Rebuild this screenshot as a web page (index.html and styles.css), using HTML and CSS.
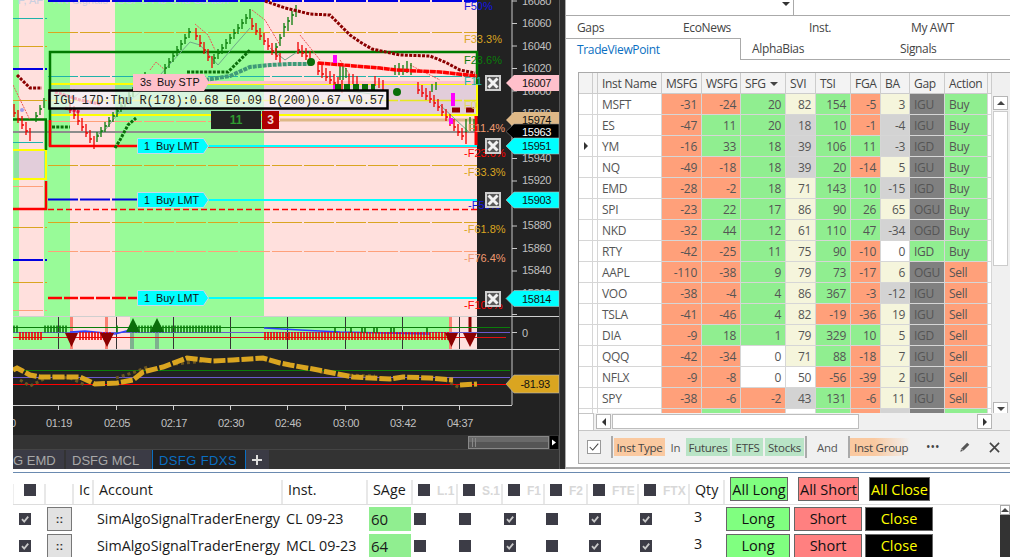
FILE: index.html
```html
<!DOCTYPE html>
<html lang="en">
<head>
<meta charset="utf-8">
<title>Trading workspace</title>
<link rel="stylesheet" href="styles.css">
</head>
<body>
<svg class="defs" width="0" height="0" aria-hidden="true">
  <symbol id="tick" viewBox="0 0 12 12"><path d="M3 6.2l2.2 2.4 4-5" fill="none" stroke="#c9c9c9" stroke-width="1.8"/></symbol>
  <symbol id="xbtn" viewBox="0 0 16 16"><rect x="1" y="1" width="14" height="14" fill="#5a5a5a" stroke="#cfcfcf" stroke-width="2"/><path d="M3.5 3.5l9 9m0-9l-9 9" stroke="#f2f2f2" stroke-width="3"/></symbol>
</svg>
<main class="top">
  <section class="chart">
    <svg class="chart-svg" viewBox="13 0 552 469" width="552" height="469">
      <rect x="13" y="0" width="552" height="469" fill="#222"/>
      <!-- main price plot bands -->
      <rect x="13" y="0" width="464" height="316" fill="#ffe0dd"/>
      <path d="M13 0h6v316h-6zM44 0h26v316h-26zM115 0h149v316h-149z" fill="#98fb98"/>
      <text class="title" x="18" y="4">F, AF</text>
      <text class="title" x="53" y="4">NN Signals - DSFG Fib Grid Canton</text>

      <!-- fib and level lines -->
      <g fill="none" stroke-dasharray="30 2">
        <path d="M48 1H477" stroke="#0000e0" stroke-width="2"/>
        <path d="M13 18.500H47M13 142.500H47M48 76.500H477" stroke="#20b2aa"/>
        <path d="M48 32.500H477M13 46.500H47M13 100.500H47M48 165.500H477M48 222.500H477M13 227.500H47M13 282.500H47" stroke="#daa520" stroke-width="1.200"/>
        <path d="M13 186.500H47M13 310.500H47M48 251.500H477M48 121.500H280" stroke="#ffa07a" stroke-width="1.200"/>
        <path d="M13 69H47M48 199.500H137M13 260H47" stroke="#0000e0" stroke-width="2"/>
      </g>
      <path d="M48 298H137" stroke="#f00" stroke-width="2.500" stroke-dasharray="14 2" fill="none"/>
      <path d="M48 209.500H477" stroke="#f00" stroke-width="1.600" stroke-dasharray="6 3" fill="none"/>

      <!-- yellow range boxes -->
      <rect x="49" y="84" width="428" height="31" fill="#6e82d2" fill-opacity=".2"/>
      <rect x="14" y="150" width="32" height="29" fill="#6e82d2" fill-opacity=".2"/>
      <path d="M49 84H477V115H49M13 150H46V179H13" fill="none" stroke="#ff0" stroke-width="2"/>
      <path d="M48 100.500H477" stroke="#e8e820" stroke-width="1.500" stroke-dasharray="30 2"/>
      <path d="M208 82.500H477" stroke="#ffc0cb" stroke-width="3"/>
      <path d="M280 120H477" stroke="#deb887" stroke-width="3"/>
      <path d="M13 132H477" stroke="#8c8c8c" stroke-width="2"/>

      <!-- green / red structure lines -->
      <path d="M477 84V52H50V146M13 119.500H47M46 120V150" fill="none" stroke="#007a00" stroke-width="2.500"/>
      <path d="M50 120V146H137M46 181V209H13" fill="none" stroke="#f00" stroke-width="2.500"/>
      <path d="M476 116V146" stroke="#f00" stroke-width="3"/>
      <path d="M208 146.800H477" stroke="#f00" stroke-width="1.500"/>
      <path d="M208 146H477M208 200H477M208 298H477" stroke="#0ff" stroke-width="2"/>

      <!-- thin average curves -->
      <path d="M97 135L105 130 125 105 160 75 190 42 200 45 218 65 235 45 250 28M270 48L285 60 300 50M340 90L380 95M440 105L470 133" fill="none" stroke="#6fa88a"/>
      <path d="M13 85L30 120M55 90L75 90M150 70L156 62 165 70M195 24L208 35 215 50M252 10L265 20 280 45M300 35L320 60M340 60L350 75M410 65L440 80" fill="none" stroke="#ee5555" stroke-dasharray="2 1"/>

      <!-- price bars -->
      <path class="bars-g" d="M97 142v-10m0 4h2m2 1v-10m0 4h2m2 1v-10m0 4h2m2 1v-10m0 4h2m2 1v-10m0 4h2m2 1v-10m0 4h2m2 1v-10m0 4h2m2 1v-10m0 4h2m2 1v-10m0 4h2m2 1v-10m0 4h2m2 1v-10m0 4h2m2 1v-10m0 4h2m2 1v-10m0 4h2M165 74v-10m0 4h2m2 0v-10m0 4h2m2 0v-10m0 4h2m2 0v-10m0 4h2m2 0v-10m0 4h2m2 0v-10m0 4h2m2 0v-10m0 4h2M214 64v-10m0 4h2m2 1v-10m0 4h2m2 1v-10m0 4h2m2 1v-10m0 4h2m2 1v-10m0 4h2m2 1v-10m0 4h2m2 1v-10m0 4h2m2 1v-10m0 4h2m2 1v-10m0 4h2m2 1v-10M36 122v-10m0 4h2m2 -1v-10m0 4h2m2 -1v-10M276 55v-12m0 4h2m2 -1v-12m0 4h2m2 -1v-14m0 4h2m2 4v-14m0 4h2m2 4v-14m0 4h2m2 2v-12M340 80v-14m3 14v-14m3 12v-10M395 75v-10m4 10v-12m4 12v-10m4 8v-12m4 14v-12M432 92v-8m4 6v-8M466 133v-14m4 12v-14m4 14v-12"/>
      <path class="bars-r" d="M14 104v13m0-4h2m2-3v13m0-4h2m2-3v13m0-4h2m2-3v13m0-4h2m2-3v13M70 100v13m0-4h2m2-3v13m0-4h2m2-3v13m0-4h2m2-3v13m0-4h2m2-3v13m0-4h2m2-3v13m0-4h2m2-3v13M196 28v12m0-4h2m2-1v12m0-4h2m2-1v12m0-4h2m2-1v12m0-4h2m2-1v12M252 18v12m0-4h2m2-3v12m0-4h2m2-3v12m0-4h2m2-3v12m0-4h2m2-3v12m0-4h2m2-3v12m0-4h2m2-3v12m0-4h2m2-3v12M298 42v12m0-4h2m2-5v12m0-4h2m2-5v12m0-4h2m2-5v12M318 62v13m0-4h2m2-6v13m0-4h2m2-6v13m0-4h2m2-6v13m0-4h2m2-6v13m0-4h2m2-6v13m0-4h2m2-6v13M349 74v12m4-12v10m4-8v12M375 76v10m4-8v10m4-8v10M418 82v12m0-4h2m2-5v12m0-4h2m2-5v12m0-4h2m2-5v12m0-4h2m2-4v12m0-4h2m2-4v12m0-4h2m2-3v12m0-4h2m2-3v12m0-4h2m2-3v12m0-4h2m2-3v12m0-4h2m2-3v12m0-4h2m2-4v12m0-4h2m2-4v12"/>

      <!-- markers and thick averages -->
      <path d="M265 1L285 8 310 14 330 15 350 35 360 42 372 49 400 55 430 56 445 62 460 70 475 73M17 75L22 80 27 85 30 88 42 88" fill="none" stroke="#8b0000" stroke-width="3" stroke-dasharray="3 1.300"/>
      <path d="M52 127H70M115 148L120 140 128 125 136 118M187 72H228L240 60 250 50" fill="none" stroke="#0a6e0a" stroke-width="3" stroke-dasharray="3 1.300"/>
      <path d="M205 80L230 76 250 67 270 65 290 64 312 64" fill="none" stroke="#3f9a78" stroke-width="4" stroke-dasharray="4 1"/>
      <path d="M318 63L380 68 396 70 440 72 477 76" fill="none" stroke="#f00" stroke-width="3.500" stroke-dasharray="6 .6"/>
      <path d="M335 55V63M453 93V106M335 85V90M451 118V124" stroke="#f0f" stroke-width="4"/>
      <path d="M452 110h8M466 110h8" stroke="#8b0000" stroke-width="5"/>
      <path d="M335 87h40" stroke="#0a6e0a" stroke-width="6" stroke-dasharray="6 3"/>
      <circle cx="311" cy="62" r="4" fill="#0a6e0a"/>
      <circle cx="397" cy="92" r="4" fill="#0a6e0a"/>
      <circle cx="22" cy="110" r="2" fill="#9c9cf0"/>
      <path d="M55 92L80 100 100 104M65 108L80 112" fill="none" stroke="#e0103c" stroke-width="3" stroke-dasharray="3 1"/>

      <!-- fib labels -->
      <text class="fib c-blue" x="464" y="10">F50%</text>
      <text class="fib c-gold" x="464" y="43">F33.3%</text>
      <text class="fib c-green" x="464" y="64">F23.6%</text>
      <text class="fib c-teal" x="464" y="85">F11</text>
      <text class="fib c-pale" x="464" y="109">F0</text>
      <text class="fib c-salmon" x="468" y="132">F11.4%</text>
      <text class="fib c-red" x="464" y="157">-F23.6%</text>
      <text class="fib c-gold" x="464" y="176">-F33.3%</text>
      <text class="fib c-blue" x="468" y="209">-F50%</text>
      <text class="fib c-gold" x="464" y="233">-F61.8%</text>
      <text class="fib c-salmon" x="464" y="262">-F76.4%</text>
      <text class="fib c-red" x="464" y="309">-F100%</text>

      <!-- right price axis -->
      <path d="M512 0V405" stroke="#c8c8c8"/>
      <path d="M512 1h5M512 23.500h5M512 46h5M512 68.500h5M512 91h5M512 113.500h5M512 136h5M512 158.500h5M512 181h5M512 203.500h5M512 226h5M512 248.500h5M512 271h5M512 293.500h5M512 314.500h5M512 332.500h5" stroke="#c8c8c8"/>
      <g class="axis">
        <text x="522" y="5">16080</text><text x="522" y="27">16060</text><text x="522" y="50">16040</text><text x="522" y="72">16020</text><text x="522" y="95">16000</text><text x="522" y="117">15980</text><text x="522" y="162">15940</text><text x="522" y="184">15920</text><text x="522" y="229">15880</text><text x="522" y="252">15860</text><text x="522" y="274">15840</text><text x="522" y="297">15820</text><text x="522" y="337">0</text>
      </g>

      <!-- box label -->
      <rect x="49.500" y="90.500" width="338" height="18" fill="#fff" fill-opacity=".66" stroke="#000" stroke-width="2.500"/>
      <text class="mono" x="53" y="104">IGU 17D:Thu R(178):0.68 E0.09 B(200)0.67 V0.57</text>
      <rect x="211" y="111" width="50" height="18" fill="#222"/>
      <rect x="262" y="111" width="17" height="18" fill="#b00000"/>
      <text class="mini c-lime" x="236" y="124" text-anchor="middle">11</text>
      <text class="mini c-soft" x="270.500" y="124" text-anchor="middle">3</text>

      <!-- order flags -->
      <path d="M133 74h71l5 8.500-5 8.500h-71z" fill="#ffc0cb"/>
      <text class="tag" x="140" y="86">3s</text><text class="tag" x="157" y="86">Buy STP</text>
      <path d="M137.500 138.500h66l5 7.500-5 7.500h-66z" fill="#0ff" stroke="#c8d8e8"/>
      <path d="M137.500 192.500h66l5 7.500-5 7.500h-66z" fill="#0ff" stroke="#c8d8e8"/>
      <path d="M137.500 290.500h66l5 7.500-5 7.500h-66z" fill="#0ff" stroke="#c8d8e8"/>
      <text class="tag" x="144" y="150">1</text><text class="tag" x="156" y="150">Buy LMT</text>
      <text class="tag" x="144" y="204">1</text><text class="tag" x="156" y="204">Buy LMT</text>
      <text class="tag" x="144" y="302">1</text><text class="tag" x="156" y="302">Buy LMT</text>

      <use href="#xbtn" x="485" y="75" width="16" height="16"/>
      <use href="#xbtn" x="485" y="138" width="16" height="16"/>
      <use href="#xbtn" x="485" y="192" width="16" height="16"/>
      <use href="#xbtn" x="485" y="291" width="16" height="16"/>

      <!-- indicator one -->
      <path d="M13 317h464v32H13z" fill="#98fb98"/>
      <path d="M70 317h60v32H70zM449 317h28v32h-28z" fill="#ffe0dd"/>
      <path d="M70 317h3v32h-3zM105 317h3v32h-3zM449 317h3v32h-3z" fill="#fa8072"/>
      <path d="M130 332h4v17h-4zM155 332h4v17h-4z" fill="#7fb08f"/>
      <path d="M468.500 317h3v16h-3z" fill="#8b0000"/>
      <path d="M58.500 317V349M116.500 317V349M173.500 317V349M230.500 317V349M287.500 317V349M345.500 317V349M402.500 317V349M459.500 317V349" stroke="#333"/>
      <path d="M13 327.500H510" stroke="#0a7d0a"/>
      <path d="M13 332.500H510" stroke="#6a5acd"/>
      <path d="M13 337.500H506" stroke="#e01010"/>
      <path d="M70 332L85 331 115 334 130 330M264 328L300 330 340 332 430 334" fill="none" stroke="#3040ff" stroke-width="1.500"/>
      <path class="osc-g" d="M14 325.500v7m3-7v7M45 325.500v7m3-7v7m3-7v7m3-7v7m3-7v7m3-7v7m3-7v7m3-7v7M117 325.500v7m16-7v7m3-7v7m3-7v7m3-7v7m3-7v7m3-7v7m3-7v7m3-7v7m3-7v7m3-7v7m3-7v7m3-7v7m3-7v7m3-7v7m3-7v7m3-7v7m3-7v7m3-7v7m3-7v7m3-7v7m3-7v7m3-7v7m3-7v7m3-7v7m3-7v7m3-7v7m3-7v7m3-7v7m3-7v7m3-7v7M335 327v6m16-6v6m11-6v6m3-6v6m9-6v6m3-6v6m14-6v6m3-6v6m33-6v6"/>
      <path class="osc-r" d="M20 332v8m3-8v8m3-8v8m3-8v8m3-8v8m3-8v8m3-8v8m3-8v8M80 332v8m3-8v8m3-8v8m3-8v8m3-8v8m3-8v8m3-8v8m3-8v8m3-8v8m3-8v8m3-8v8M265 332v8m3-8v8m3-8v8m3-8v8m3-8v8m3-8v8m3-8v8m3-8v8m3-8v8m3-8v8m3-8v8m3-8v8m3-8v8m3-8v8m3-8v8m3-8v8m3-8v8m3-8v8m3-8v8m3-8v8m3-8v8m3-8v8m3-8v8m3-8v8m3-8v8m3-8v8m3-8v8m3-8v8m3-8v8m3-8v8m3-8v8m3-8v8m3-8v8m3-8v8m3-8v8m3-8v8m3-8v8m3-8v8m3-8v8m3-8v8m3-8v8m3-8v8m3-8v8m3-8v8m3-8v8m3-8v8m3-8v8m3-8v8m3-8v8m3-8v8m3-8v8m3-8v8m3-8v8m3-8v8m3-8v8m3-8v8m3-8v8m3-8v8m3-8v8m3-8v8m3-8v8m3-8v8"/>
      <path d="M65 333h13l-6.500 14zM100 333h14l-7 14zM445 333h13l-6.500 14zM463 333h14l-7 14z" fill="#8b0000"/>
      <path d="M126 332h14l-7-14zM150 332h14l-7-14z" fill="#0a6e0a"/>
      <path d="M13 316.500H560M13 349.500H560" stroke="#cfcfcf"/>

      <!-- indicator two -->
      <path d="M13 370.500H510" stroke="#0a7d0a"/>
      <path d="M13 377.500H510" stroke="#6a5acd"/>
      <path d="M13 384.500H506" stroke="#f00"/>
      <path d="M20 380L30 386 50 376 70 378 85 385M116 378L135 372 150 366M175 364L205 361M320 372L345 375 375 376M445 380L460 388" fill="none" stroke="#6b5520" stroke-width="3" stroke-dasharray="3 3"/>
      <path d="M13 370L17 368 30 375 40 377 63 377 80 377 95 384 117 383 133 380 143 372 163 367 187 358 213 361 233 360 263 358 280 363 290 365 313 369 333 373 353 377 390 379 403 377 430 378 453 380M460 385L477 384" fill="none" stroke="#daa520" stroke-width="5" stroke-dasharray="12 2"/>

      <!-- price tags -->
      <path d="M506 83l8-8h45v16h-45z" fill="#ffc0cb"/>
      <path d="M506 120l8-8h45v16h-45z" fill="#deb887"/>
      <path d="M506 131.500l8-7.500h45v15h-45z" fill="#000" stroke="#888" stroke-width=".6"/>
      <path d="M506 146l8-8h45v16h-45z" fill="#0ff" stroke="#bbb" stroke-width=".6"/>
      <path d="M506 200l8-8h45v16h-45z" fill="#0ff" stroke="#bbb" stroke-width=".6"/>
      <path d="M506 298.500l8-8h45v16h-45z" fill="#0ff" stroke="#bbb" stroke-width=".6"/>
      <path d="M506 384l8-9h45v18h-45z" fill="#daa520" stroke="#bbb" stroke-width=".6"/>
      <g class="ptag">
        <text x="522" y="87">16007</text>
        <text x="522" y="124">15974</text>
        <text x="522" y="136" class="c-white">15963</text>
        <text x="522" y="150">15951</text>
        <text x="522" y="204">15903</text>
        <text x="522" y="303">15814</text>
        <text x="520.500" y="388">-81.93</text>
      </g>

      <!-- time axis -->
      <path d="M13 405.500H512" stroke="#cfcfcf"/>
      <path d="M58.500 405v5M116.500 405v5M173.500 405v5M230.500 405v5M287.500 405v5M345.500 405v5M402.500 405v5M459.500 405v5" stroke="#cfcfcf"/>
      <g class="axis" text-anchor="middle">
        <text x="59" y="427">01:19</text><text x="117" y="427">02:05</text><text x="174" y="427">02:17</text><text x="231" y="427">02:30</text><text x="288" y="427">02:46</text><text x="346" y="427">03:00</text><text x="403" y="427">03:42</text><text x="460" y="427">04:37</text>
      </g>
      <text class="axis" x="10" y="427">0</text>

      <!-- lower scroller -->
      <rect x="13" y="435" width="546" height="34" fill="#333"/>
      <rect x="468.500" y="436.500" width="80" height="12" fill="#555" stroke="#888"/>
      <rect x="469" y="437" width="79" height="5" fill="#6a6a6a"/>
      <path d="M472.500 438v9M475.500 438v9" stroke="#888"/>
      <rect x="550" y="436" width="8" height="13" fill="#000"/>
      <path d="M552 439.500l4 3-4 3z" fill="#fff"/>
      <path d="M13 449.500H559" stroke="#444"/>
      <path d="M559.500 0V469" stroke="#555"/>
      <rect x="560" y="0" width="5" height="469" fill="#2c2c2c"/>

      <!-- tabs -->
      <rect x="13" y="450" width="51" height="19" fill="#3b3b45"/>
      <rect x="66" y="450" width="85" height="19" fill="#3b3b45"/>
      <rect x="152" y="450" width="93" height="19" fill="#1e1e1e"/>
      <path d="M152.500 450v19M245.500 450v19" stroke="#0a6fc2"/>
      <rect x="246" y="450" width="23" height="19" fill="#3b3b45"/>
      <text class="stab" x="-13" y="465">DSFG EMD</text>
      <text class="stab" x="72" y="465">DSFG MCL</text>
      <text class="stab stab-on" x="159" y="465">DSFG FDXS</text>
      <path d="M252 460h10M257 455v10" stroke="#ddd" stroke-width="2"/>
    </svg>
  </section>

  <aside class="panel">
    <div class="combo"><span class="combo-field"><i class="combo-arrow"></i></span></div>
    <div class="tabs">
      <span class="tab t-gaps">Gaps</span><span class="tab t-eco">EcoNews</span><span class="tab t-inst">Inst.</span><span class="tab">My AWT</span>
    </div>
    <div class="tabs tabs-lower">
      <span class="tab tab-on">TradeViewPoint</span><span class="tab t-alpha">AlphaBias</span><span class="tab">Signals</span>
    </div>
    <div class="pane">
      <div class="box">
        <div class="gridwrap">
          <div class="gridmain">
            <table class="grid">
              <colgroup><col class="w14"><col class="w5"><col class="w64"><col class="w40"><col class="w39"><col class="w45"><col class="w30"><col class="w35"><col class="w30"><col class="w29"><col class="w35"><col class="w43"><col class="w4"></colgroup>
              <thead>
                <tr><th></th><th></th><th>Inst Name</th><th>MSFG</th><th>WSFG</th><th>SFG <i class="sort"></i></th><th>SVI</th><th>TSI</th><th>FGA</th><th>BA</th><th>Gap</th><th>Action</th><th></th></tr>
              </thead>
              <tbody>
                <tr><td class="hd"></td><td class="hd"></td><td class="nm">MSFT</td><td class="n r">-31</td><td class="n r">-24</td><td class="n g">20</td><td class="n c">82</td><td class="n g">154</td><td class="n r">-5</td><td class="n c">3</td><td class="d">IGU</td><td class="g">Buy</td><td></td></tr>
                <tr><td class="hd"></td><td class="hd"></td><td class="nm">ES</td><td class="n r">-47</td><td class="n g">11</td><td class="n g">20</td><td class="n s">18</td><td class="n g">10</td><td class="n r">-1</td><td class="n s">-4</td><td class="d">IGU</td><td class="g">Buy</td><td></td></tr>
                <tr><td class="hd cur"><i class="rowmark"></i></td><td class="hd"></td><td class="nm">YM</td><td class="n r">-16</td><td class="n g">33</td><td class="n g">18</td><td class="n s">39</td><td class="n g">106</td><td class="n g">11</td><td class="n s">-3</td><td class="d">IGD</td><td class="g">Buy</td><td></td></tr>
                <tr><td class="hd"></td><td class="hd"></td><td class="nm">NQ</td><td class="n r">-49</td><td class="n r">-18</td><td class="n g">18</td><td class="n s">39</td><td class="n g">20</td><td class="n r">-14</td><td class="n c">5</td><td class="d">IGU</td><td class="g">Buy</td><td></td></tr>
                <tr><td class="hd"></td><td class="hd"></td><td class="nm">EMD</td><td class="n r">-28</td><td class="n r">-2</td><td class="n g">18</td><td class="n c">71</td><td class="n g">143</td><td class="n g">10</td><td class="n s">-15</td><td class="d">IGD</td><td class="g">Buy</td><td></td></tr>
                <tr><td class="hd"></td><td class="hd"></td><td class="nm">SPI</td><td class="n r">-23</td><td class="n g">22</td><td class="n g">17</td><td class="n c">86</td><td class="n g">90</td><td class="n g">26</td><td class="n c">65</td><td class="d">OGU</td><td class="g">Buy</td><td></td></tr>
                <tr><td class="hd"></td><td class="hd"></td><td class="nm">NKD</td><td class="n r">-32</td><td class="n g">44</td><td class="n g">12</td><td class="n c">61</td><td class="n g">110</td><td class="n g">47</td><td class="n s">-34</td><td class="d">OGD</td><td class="g">Buy</td><td></td></tr>
                <tr><td class="hd"></td><td class="hd"></td><td class="nm">RTY</td><td class="n r">-42</td><td class="n r">-25</td><td class="n g">11</td><td class="n c">75</td><td class="n g">90</td><td class="n r">-10</td><td class="n">0</td><td class="g">IGD</td><td class="g">Buy</td><td></td></tr>
                <tr><td class="hd"></td><td class="hd"></td><td class="nm">AAPL</td><td class="n r">-110</td><td class="n r">-38</td><td class="n g">9</td><td class="n c">79</td><td class="n g">73</td><td class="n r">-17</td><td class="n c">6</td><td class="d">OGU</td><td class="r">Sell</td><td></td></tr>
                <tr><td class="hd"></td><td class="hd"></td><td class="nm">VOO</td><td class="n r">-38</td><td class="n r">-4</td><td class="n g">4</td><td class="n c">86</td><td class="n g">367</td><td class="n r">-3</td><td class="n s">-12</td><td class="d">IGU</td><td class="r">Sell</td><td></td></tr>
                <tr><td class="hd"></td><td class="hd"></td><td class="nm">TSLA</td><td class="n r">-41</td><td class="n r">-46</td><td class="n g">4</td><td class="n c">82</td><td class="n r">-19</td><td class="n r">-36</td><td class="n c">19</td><td class="d">IGU</td><td class="r">Sell</td><td></td></tr>
                <tr><td class="hd"></td><td class="hd"></td><td class="nm">DIA</td><td class="n r">-9</td><td class="n g">18</td><td class="n g">1</td><td class="n c">79</td><td class="n g">329</td><td class="n g">10</td><td class="n c">5</td><td class="d">IGD</td><td class="r">Sell</td><td></td></tr>
                <tr><td class="hd"></td><td class="hd"></td><td class="nm">QQQ</td><td class="n r">-42</td><td class="n r">-34</td><td class="n">0</td><td class="n c">71</td><td class="n g">88</td><td class="n r">-18</td><td class="n c">7</td><td class="d">IGU</td><td class="r">Sell</td><td></td></tr>
                <tr><td class="hd"></td><td class="hd"></td><td class="nm">NFLX</td><td class="n r">-9</td><td class="n r">-8</td><td class="n">0</td><td class="n">50</td><td class="n r">-56</td><td class="n r">-39</td><td class="n c">2</td><td class="d">IGU</td><td class="r">Sell</td><td></td></tr>
                <tr><td class="hd"></td><td class="hd"></td><td class="nm">SPY</td><td class="n r">-38</td><td class="n r">-6</td><td class="n r">-2</td><td class="n s">43</td><td class="n g">131</td><td class="n r">-6</td><td class="n c">11</td><td class="d">IGU</td><td class="r">Sell</td><td></td></tr>
                <tr><td class="hd"></td><td class="hd"></td><td class="nm"></td><td class="r"></td><td class="g"></td><td class="r"></td><td></td><td class="g"></td><td class="r"></td><td class="s"></td><td class="d"></td><td class="g"></td><td></td></tr>
              </tbody>
            </table>
          </div>
          <div class="vscroll">
            <span class="sbtn"><i class="arr arr-up"></i></span>
            <span class="vthumb"></span>
            <span class="vtrack"></span>
            <span class="sbtn"><i class="arr arr-down"></i></span>
          </div>
        </div>
        <div class="hscroll">
          <span class="hs-corner"></span>
          <span class="sbtn hbtn"><i class="arr arr-left"></i></span>
          <span class="hthumb"></span>
          <span class="htrack"></span>
          <span class="sbtn hbtn"><i class="arr arr-right"></i></span>
        </div>
        <div class="filter">
          <span class="fcheck"><svg viewBox="0 0 14 14" width="12" height="12"><path d="M2 7l3.500 3.500L12 3" fill="none" stroke="#444" stroke-width="1.200"/></svg></span>
          <span class="fgroup">
            <span class="chip chip-o chip-type">Inst Type</span>
            <span class="word">In</span>
            <span class="chip chip-g chip-fut">Futures</span>
            <span class="chip chip-g chip-etf">ETFS</span>
            <span class="chip chip-g chip-sto">Stocks</span>
          </span>
          <span class="word w-and">And</span>
          <span class="fgroup fgroup-open"><span class="chip chip-fade">Inst Group</span></span>
          <span class="dots">•••</span>
          <svg class="pencil" viewBox="0 0 14 14" width="12" height="12"><path d="M1.500 12.500l1-3.500L9.500 2l2.500 2.500L5 11.500z" fill="#555"/><path d="M2.500 9L5 11.500" stroke="#eee"/></svg>
          <svg class="closex" viewBox="0 0 12 12" width="11" height="11"><path d="M1 1l10 10m0-10L1 11" stroke="#444" stroke-width="1.800"/></svg>
        </div>
      </div>
    </div>
  </aside>
</main>

<section class="orders">
  <div class="ogrid ohead">
    <span class="oh"><i class="ck ck-h"></i></span>
    <span class="oh"></span>
    <span class="oh olabel">Ic</span>
    <span class="oh olabel">Account</span>
    <span class="oh olabel">Inst.</span>
    <span class="oh olabel">SAge</span>
    <span class="oh"><i class="ck ck-h"></i><b class="dim">L.1</b></span>
    <span class="oh"><i class="ck ck-h"></i><b class="dim">S.1</b></span>
    <span class="oh"><i class="ck ck-h"></i><b class="dim">F1</b></span>
    <span class="oh"><i class="ck ck-h"></i><b class="dim">F2</b></span>
    <span class="oh"><i class="ck ck-h"></i><b class="dim">FTE</b></span>
    <span class="oh"><i class="ck ck-h"></i><b class="dim">FTX</b></span>
    <span class="oh olabel">Qty</span>
    <span class="oh oh-btn"><button class="btn all b-long">All Long</button></span>
    <span class="oh oh-btn"><button class="btn all b-short">All Short</button></span>
    <span class="oh oh-btn"><button class="btn all b-close">All Close</button></span>
    <span class="oh oh-last"></span>
  </div>
  <div class="orows">
    <div class="ogrid orow">
      <span class="oc"><i class="ck"><svg><use href="#tick"/></svg></i></span>
      <span class="oc"><button class="grip">::</button></span>
      <span class="oc"></span>
      <span class="oc txt">SimAlgoSignalTraderEnergy</span>
      <span class="oc txt">CL 09-23</span>
      <span class="oc"><span class="sage">60</span></span>
      <span class="oc"><i class="ck"></i></span>
      <span class="oc"><i class="ck"></i></span>
      <span class="oc"><i class="ck"><svg><use href="#tick"/></svg></i></span>
      <span class="oc"><i class="ck"></i></span>
      <span class="oc"><i class="ck"><svg><use href="#tick"/></svg></i></span>
      <span class="oc"><i class="ck"><svg><use href="#tick"/></svg></i></span>
      <span class="oc txt qty">3</span>
      <span class="oc"><button class="btn b-long rowb">Long</button></span>
      <span class="oc"><button class="btn b-short rowb">Short</button></span>
      <span class="oc"><button class="btn b-close rowb">Close</button></span>
      <span class="oc"></span>
    </div>
    <div class="ogrid orow">
      <span class="oc"><i class="ck"><svg><use href="#tick"/></svg></i></span>
      <span class="oc"><button class="grip">::</button></span>
      <span class="oc"></span>
      <span class="oc txt">SimAlgoSignalTraderEnergy</span>
      <span class="oc txt">MCL 09-23</span>
      <span class="oc"><span class="sage">64</span></span>
      <span class="oc"><i class="ck"></i></span>
      <span class="oc"><i class="ck"></i></span>
      <span class="oc"><i class="ck"><svg><use href="#tick"/></svg></i></span>
      <span class="oc"><i class="ck"></i></span>
      <span class="oc"><i class="ck"><svg><use href="#tick"/></svg></i></span>
      <span class="oc"><i class="ck"><svg><use href="#tick"/></svg></i></span>
      <span class="oc txt qty">3</span>
      <span class="oc"><button class="btn b-long rowb">Long</button></span>
      <span class="oc"><button class="btn b-short rowb">Short</button></span>
      <span class="oc"><button class="btn b-close rowb">Close</button></span>
      <span class="oc"></span>
    </div>
    <div class="oscroll"><span class="oscroll-up"><i class="arr arr-up"></i></span></div>
  </div>
</section>
</body>
</html>
```
FILE: styles.css
```css
* { box-sizing: border-box; }
html, body { margin: 0; padding: 0; background: #fff; }
body { width: 1024px; height: 557px; overflow: hidden; font-family: "Open Sans", "Liberation Sans", sans-serif; color: #444; }
.defs { position: absolute; }
i { font-style: normal; display: block; }

.top { display: flex; height: 469px; }
.chart { width: 552px; margin-left: 13px; height: 469px; flex: none; }
.chart-svg { display: block; }
.chart-svg text { font-family: "Liberation Sans", Arial, sans-serif; }
.bars-g, .bars-r, .osc-g, .osc-r { fill: none; }
.bars-g { stroke: #0a7d0a; stroke-width: 1.3; }
.bars-r { stroke: #f00000; stroke-width: 1.3; }
.osc-g { stroke: #0a7d0a; stroke-width: 1.6; }
.osc-r { stroke: #f00000; stroke-width: 1.6; }
.chart-svg .title { font-size: 11px; fill: #c9cfe0; }
.chart-svg .fib { font-size: 11px; }
.c-blue { fill: #1414e0; }
.c-gold { fill: #daa520; }
.c-green { fill: #0a7d0a; }
.c-teal { fill: #20b2aa; }
.c-pale { fill: #e0d860; }
.c-salmon { fill: #f09a70; }
.c-red { fill: #f00; }
.c-lime { fill: #2f9a2f; }
.c-soft { fill: #f0d8d8; }
.chart-svg .c-white { fill: #fff; }
.chart-svg .axis text, .chart-svg text.axis { font-size: 11px; letter-spacing: -.3px; fill: #c0c0c0; }
.chart-svg .mono { font-family: "Liberation Mono", monospace; font-size: 12px; fill: #222; }
.chart-svg .mini { font-size: 12px; font-weight: 700; }
.chart-svg .tag { font-size: 10.800px; fill: #111; }
.chart-svg .ptag text { font-size: 11px; letter-spacing: -.3px; fill: #111; }
.chart-svg .ptag .c-white { fill: #fff; }
.chart-svg .stab { font-size: 13px; fill: #a8a8a8; }
.chart-svg .stab-on { fill: #0a6fc2; letter-spacing: .4px; }

/* right panel */
.panel { width: 445px; height: 469px; border-left: 1px solid #aaa; border-bottom: 2px solid #aaa; display: flex; flex-direction: column; font-size: 12px; flex: none; }
.combo { height: 16px; border-bottom: 1px solid #aaa; flex: none; }
.combo-field { display: block; width: 228px; height: 15px; border-right: 1px solid #aaa; position: relative; }
.combo-arrow { position: absolute; right: 3px; top: 2px; border: 4px solid transparent; border-top: 4px solid #333; border-bottom: 0; }
.tabs { display: flex; height: 22px; flex: none; align-items: center; color: #444; letter-spacing: -.35px; }
.tab { padding-left: 11px; display: flex; align-items: center; height: 100%; }
.t-gaps { width: 106px; }
.t-eco { width: 126px; }
.t-inst { width: 102px; }
.tabs-lower { position: relative; }
.tab-on { width: 176px; color: #0a6fc2; border-top: 1px solid #aaa; border-right: 1px solid #aaa; margin-left: -1px; border-left: 1px solid #aaa; }
.t-alpha { width: 148px; border-bottom: 1px solid #aaa; }
.tabs-lower .tab:last-child { flex: 1; border-bottom: 1px solid #aaa; }
.pane { flex: 1; padding: 12px 0 4px 12px; }
.box { height: 392px; border: 1px solid #aaa; border-right: 0; background: #f0f0f0; display: flex; flex-direction: column; }
.gridwrap { height: 340px; display: flex; background: #fff; flex: none; }
.gridmain { width: 413px; overflow: hidden; height: 340px; flex: none; }
.grid { border-collapse: separate; border-spacing: 0; table-layout: fixed; width: 413px; color: #555; }
.w14 { width: 14px; } .w5 { width: 5px; } .w64 { width: 64px; } .w40 { width: 40px; } .w39 { width: 39px; } .w45 { width: 45px; }
.w30 { width: 30px; } .w35 { width: 35px; } .w29 { width: 29px; } .w43 { width: 43px; } .w4 { width: 4px; }
.grid th { height: 21px; background: #f3f3f3; border-right: 1px solid #ccc; border-bottom: 1px solid #ccc; font-weight: 400; text-align: left; padding: 0 0 0 4px; font-size: 12px; letter-spacing: -.3px; white-space: nowrap; color: #444; }
.grid td { height: 21px; padding: 0 4px; border-right: 1px solid #d6d6d6; border-bottom: 1px solid #d6d6d6; font-size: 12px; letter-spacing: -.3px; white-space: nowrap; overflow: hidden; }
.grid td.hd { padding: 0; }
.grid td.n { text-align: right; }
.r { background: #ffa07a; }
.g { background: #90ee90; }
.c { background: #f5f5dc; }
.s { background: #d3d3d3; }
.d { background: #808080; }
.sort { display: inline-block; margin: 0 0 2px 2px; border: 4px solid transparent; border-top: 4px solid #444; border-bottom: 0; }
.rowmark { width: 0; height: 0; margin-left: 5px; border: 4px solid transparent; border-left: 4px solid #333; border-right: 0; }
.vscroll { width: 18px; flex: none; height: 340px; padding: 23px 2px 0 1px; background: #f0f0f0; display: flex; flex-direction: column; gap: 1px; }
.sbtn { display: flex; align-items: center; justify-content: center; height: 14px; background: #fff; border: 1px solid #b5b5b5; flex: none; }
.vthumb { height: 155px; background: #fff; border: 1px solid #ccc; flex: none; }
.vtrack { flex: none; height: 134px; }
.arr { width: 0; height: 0; border: 4px solid transparent; }
.arr-up { border-bottom: 4px solid #444; border-top: 0; }
.arr-down { border-top: 4px solid #444; border-bottom: 0; }
.arr-left { border-right: 4px solid #333; border-left: 0; }
.arr-right { border-left: 4px solid #333; border-right: 0; }
.hscroll { height: 18px; display: flex; align-items: center; gap: 1px; background: #f0f0f0; padding-right: 18px; flex: none; border-bottom: 1px solid #c6c6c6; }
.hs-corner { width: 15px; height: 17px; background: #fff; border-right: 1px solid #c6c6c6; margin-right: 1px; flex: none; border-top: 1px solid #c6c6c6; }
.hbtn { width: 15px; height: 15px; }
.hthumb { width: 247px; height: 15px; background: #fff; border: 1px solid #bdbdbd; flex: none; }
.htrack { flex: 1; }
.filter { flex: 1; display: flex; align-items: center; padding-left: 8px; font-size: 11.500px; letter-spacing: -.25px; position: relative; }
.fcheck { width: 14px; height: 14px; background: #fff; border: 1px solid #999; display: flex; align-items: center; justify-content: center; flex: none; }
.fgroup { display: flex; align-items: center; gap: 2px; height: 22px; margin-left: 10px; padding: 0 1px; border-left: 2px solid #aaa; border-right: 2px solid #aaa; flex: none; }
.fgroup-open { border-right: 0; margin-left: 11px; padding: 0; }
.chip { height: 18px; display: flex; align-items: center; justify-content: center; white-space: nowrap; color: #444; flex: none; }
.chip-o { background: #fac9a0; }
.chip-g { background: #b9e4c6; }
.chip-type { width: 51px; }
.chip-fut { width: 44px; }
.chip-etf { width: 31px; }
.chip-sto { width: 39px; }
.chip-fade { background: linear-gradient(90deg, #fac9a0 40%, #f0f0f0); width: 60px; justify-content: flex-start; padding-left: 4px; }
.word { width: 17px; text-align: center; color: #555; flex: none; }
.w-and { margin-left: 10px; width: 20px; }
.dots { margin-left: 16px; width: 16px; font-size: 12px; letter-spacing: 0; color: #444; flex: none; line-height: 1; white-space: nowrap; }
.pencil { margin-left: 17px; flex: none; }
.closex { margin-left: 18px; flex: none; }

/* orders */
.orders { margin: 3px 14px 0 13px; border-top: 1px solid #6a8ab0; font-size: 14.300px; color: #1a1a1a; position: relative; height: 85px; }
.ogrid { display: grid; grid-template-columns: 33px 28px 20px 189px 85px 45px 45px 45px 42px 43px 51px 51px 35px 68px 71px 71px 1fr; }
.ohead { height: 32px; border-bottom: 1px solid #ddd; }
.oh { display: flex; align-items: center; gap: 7px; padding-left: 5px; border-right: 2px solid #e8e8e8; height: 20px; margin-top: 11px; }
.oh:first-child { padding-left: 10px; border-left: 1px solid #eee; }
.oh .ck-h { margin-top: -8px; }
.oh-btn { border-right: 0; padding-left: 5px; margin-top: 4px; height: 24px; }
.oh-last { border-right: 0; }
.olabel { margin-top: 7px; height: 24px; padding-bottom: 6px; }
.dim { font-weight: 700; font-size: 12px; color: #d8d8d8; font-family: "Liberation Sans", sans-serif; margin-top: -7px; }
.ck { display: block; width: 12px; height: 12px; background: #3c3c46; flex: none; }
.ck svg { display: block; width: 12px; height: 12px; }
.orow { height: 27px; align-items: start; padding-top: 1px; }
.oc { display: flex; align-items: center; height: 25px; padding-left: 1px; }
.oc > .ck { margin-top: 1px; }
.oc:nth-child(1) { padding-left: 6px; }
.txt { padding-left: 3px; white-space: nowrap; }
.qty { padding-left: 4px; margin-top: -2px; }
.grip { width: 25px; height: 24px; margin: 0; padding: 0; background: #e2e2e2; border: 1px solid #777; font: 700 11px "Liberation Sans", sans-serif; color: #333; }
.sage { display: block; width: 42px; height: 24px; background: #90ee90; padding-left: 2px; line-height: 24px; font-size: 15px; }
.btn { margin: 0; padding: 0; border: 1px solid #666; font-family: "Open Sans", sans-serif; font-size: 14.500px; color: #111; }
.all { height: 24px; }
.b-long { background: #80ff80; }
.b-short { background: #ff8080; }
.b-close { background: #000; color: #ff0; }
.rowb { height: 24px; width: 64px; }
.oh-btn .b-long { width: 58px; }
.oh-btn .b-short, .oh-btn .b-close { width: 61px; }
.oc:nth-child(15) .rowb, .oc:nth-child(16) .rowb { width: 68px; }
.oscroll { position: absolute; right: 0; top: 32px; width: 10px; height: 52px; background: #333; }
.oscroll-up { display: flex; align-items: center; justify-content: center; height: 10px; background: #fff; border: 1px solid #aaa; }
```
